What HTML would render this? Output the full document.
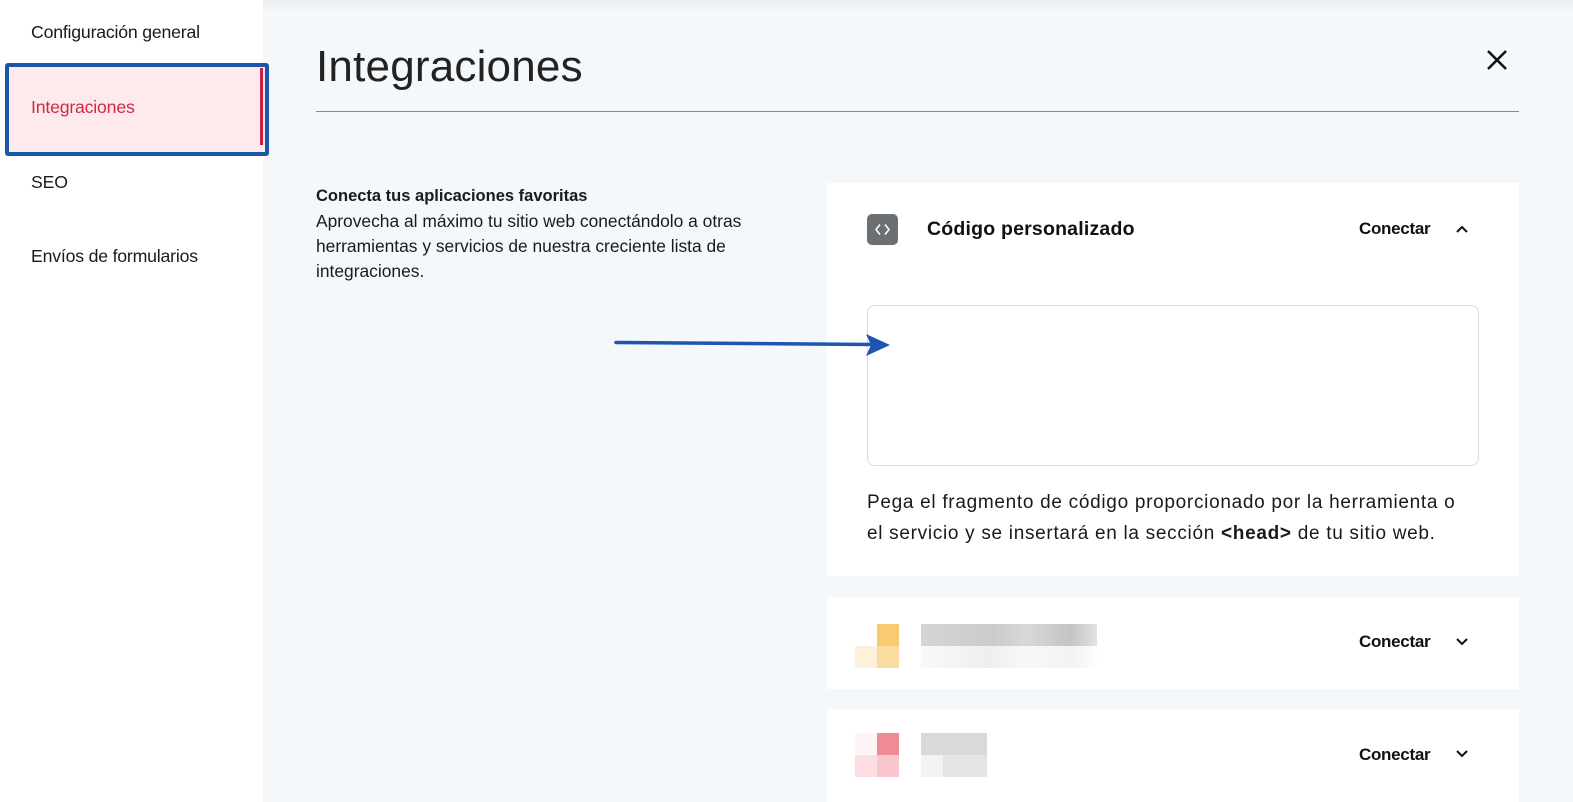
<!DOCTYPE html>
<html><head><meta charset="utf-8"><style>
*{margin:0;padding:0;box-sizing:border-box}
body{width:1573px;height:802px;overflow:hidden;background:#f4f8fb;font-family:"Liberation Sans",sans-serif;color:#111;position:relative}
.abs{position:absolute}
.side{left:0;top:0;width:263px;height:802px;background:#fff}
.nav{left:31px;font-size:17.7px;color:#1a1a1a;letter-spacing:-0.2px}
.card{background:#fff;left:827px;width:692px}
.px{position:absolute;width:22px;height:22px}
.btn{font-size:17px;font-weight:bold;color:#111;letter-spacing:-0.3px}
</style></head><body>
<div class="abs" style="left:0;top:0;width:1573px;height:12px;background:linear-gradient(#e9ecef,rgba(244,248,251,0))"></div>
<div class="abs side"></div>
<div class="abs nav" style="top:22px">Configuración general</div>
<div class="abs" style="left:5px;top:63px;width:264px;height:93px;border:4px solid #1b57a8;border-radius:3px;background:#feeaec"></div>
<div class="abs" style="left:260px;top:68px;width:3px;height:77px;background:#d01f45"></div>
<div class="abs nav" style="top:97px;color:#d0284a">Integraciones</div>
<div class="abs nav" style="top:172px">SEO</div>
<div class="abs nav" style="top:246px">Envíos de formularios</div>

<div class="abs" style="left:316px;top:42px;font-size:44px;font-weight:300;color:#222;letter-spacing:0.2px">Integraciones</div>
<div class="abs" style="left:316px;top:111px;width:1203px;height:1px;background:#8a8a8a"></div>
<svg class="abs" style="left:1484px;top:47px" width="26" height="26" viewBox="0 0 26 26"><path d="M4 4L22 22M22 4L4 22" stroke="#111" stroke-width="2.6"/></svg>

<div class="abs" style="left:316px;top:183px;font-size:17.4px;line-height:25px;width:480px;color:#1a1a1a"><b style="font-size:16.5px">Conecta tus aplicaciones favoritas</b><br>Aprovecha al máximo tu sitio web conectándolo a otras herramientas y servicios de nuestra creciente lista de integraciones.</div>

<div class="abs card" style="top:183px;height:393px"></div>
<div class="abs" style="left:867px;top:214px;width:31px;height:31px;border-radius:5px;background:#6c7073"></div>
<svg class="abs" style="left:867px;top:214px" width="31" height="31" viewBox="0 0 31 31"><path d="M13 10.5L9 15.5L13 20.5M18 10.5L22 15.5L18 20.5" stroke="#fff" stroke-width="1.6" fill="none"/></svg>
<div class="abs" style="left:927px;top:218px;font-size:19.5px;font-weight:bold;color:#111;letter-spacing:0.2px">Código personalizado</div>
<div class="abs btn" style="left:1359px;top:219px">Conectar</div>
<svg class="abs" style="left:1454px;top:222px" width="16" height="14" viewBox="0 0 16 14"><path d="M3 10L8 5L13 10" stroke="#111" stroke-width="2" fill="none"/></svg>
<div class="abs" style="left:867px;top:305px;width:612px;height:161px;border:1px solid #d9dcdf;border-radius:8px"></div>
<div class="abs" style="left:867px;top:487px;font-size:19px;line-height:31px;width:612px;color:#1a1a1a;letter-spacing:0.7px">Pega el fragmento de código proporcionado por la herramienta o<br>el servicio y se insertará en la sección <b>&lt;head&gt;</b> de tu sitio web.</div>

<svg class="abs" style="left:610px;top:328px" width="285" height="32" viewBox="0 0 285 32"><path d="M6 14.5L262 16.5" stroke="#1d55b0" stroke-width="3.5" stroke-linecap="round"/><path d="M256 6L280 17L256 28L261 17Z" fill="#1d55b0"/></svg>

<div class="abs card" style="top:597px;height:92px"></div>
<div class="px" style="left:877px;top:624px;background:#f8cb73"></div>
<div class="px" style="left:877px;top:646px;background:#fbdc9f"></div>
<div class="px" style="left:855px;top:646px;background:#fdf1dc"></div>
<div class="abs" style="left:921px;top:624px;width:176px;height:22px;background:linear-gradient(90deg,#d6d6d6,#cbcbcb 40%,#d8d8d8 60%,#c4c4c4 85%,#e3e3e3)"></div>
<div class="abs" style="left:921px;top:646px;width:176px;height:22px;background:linear-gradient(90deg,#f9f9f9,#eeeeee 40%,#f8f8f8 60%,#f3f3f3 85%,#fdfdfd)"></div>
<div class="abs btn" style="left:1359px;top:632px">Conectar</div>
<svg class="abs" style="left:1454px;top:635px" width="16" height="14" viewBox="0 0 16 14"><path d="M3 4L8 9L13 4" stroke="#111" stroke-width="2" fill="none"/></svg>

<div class="abs card" style="top:709px;height:93px"></div>
<div class="px" style="left:877px;top:733px;background:#f08a95"></div>
<div class="px" style="left:877px;top:755px;background:#f9c6cd"></div>
<div class="px" style="left:855px;top:755px;background:#fcdde2"></div>
<div class="px" style="left:855px;top:733px;background:#fef5f5"></div>
<div class="abs" style="left:921px;top:733px;width:66px;height:22px;background:#d9d9d9"></div>
<div class="abs" style="left:921px;top:755px;width:66px;height:22px;background:linear-gradient(90deg,#f3f3f3 33%,#e5e5e5 33%)"></div>
<div class="abs btn" style="left:1359px;top:745px">Conectar</div>
<svg class="abs" style="left:1454px;top:747px" width="16" height="14" viewBox="0 0 16 14"><path d="M3 4L8 9L13 4" stroke="#111" stroke-width="2" fill="none"/></svg>
</body></html>
